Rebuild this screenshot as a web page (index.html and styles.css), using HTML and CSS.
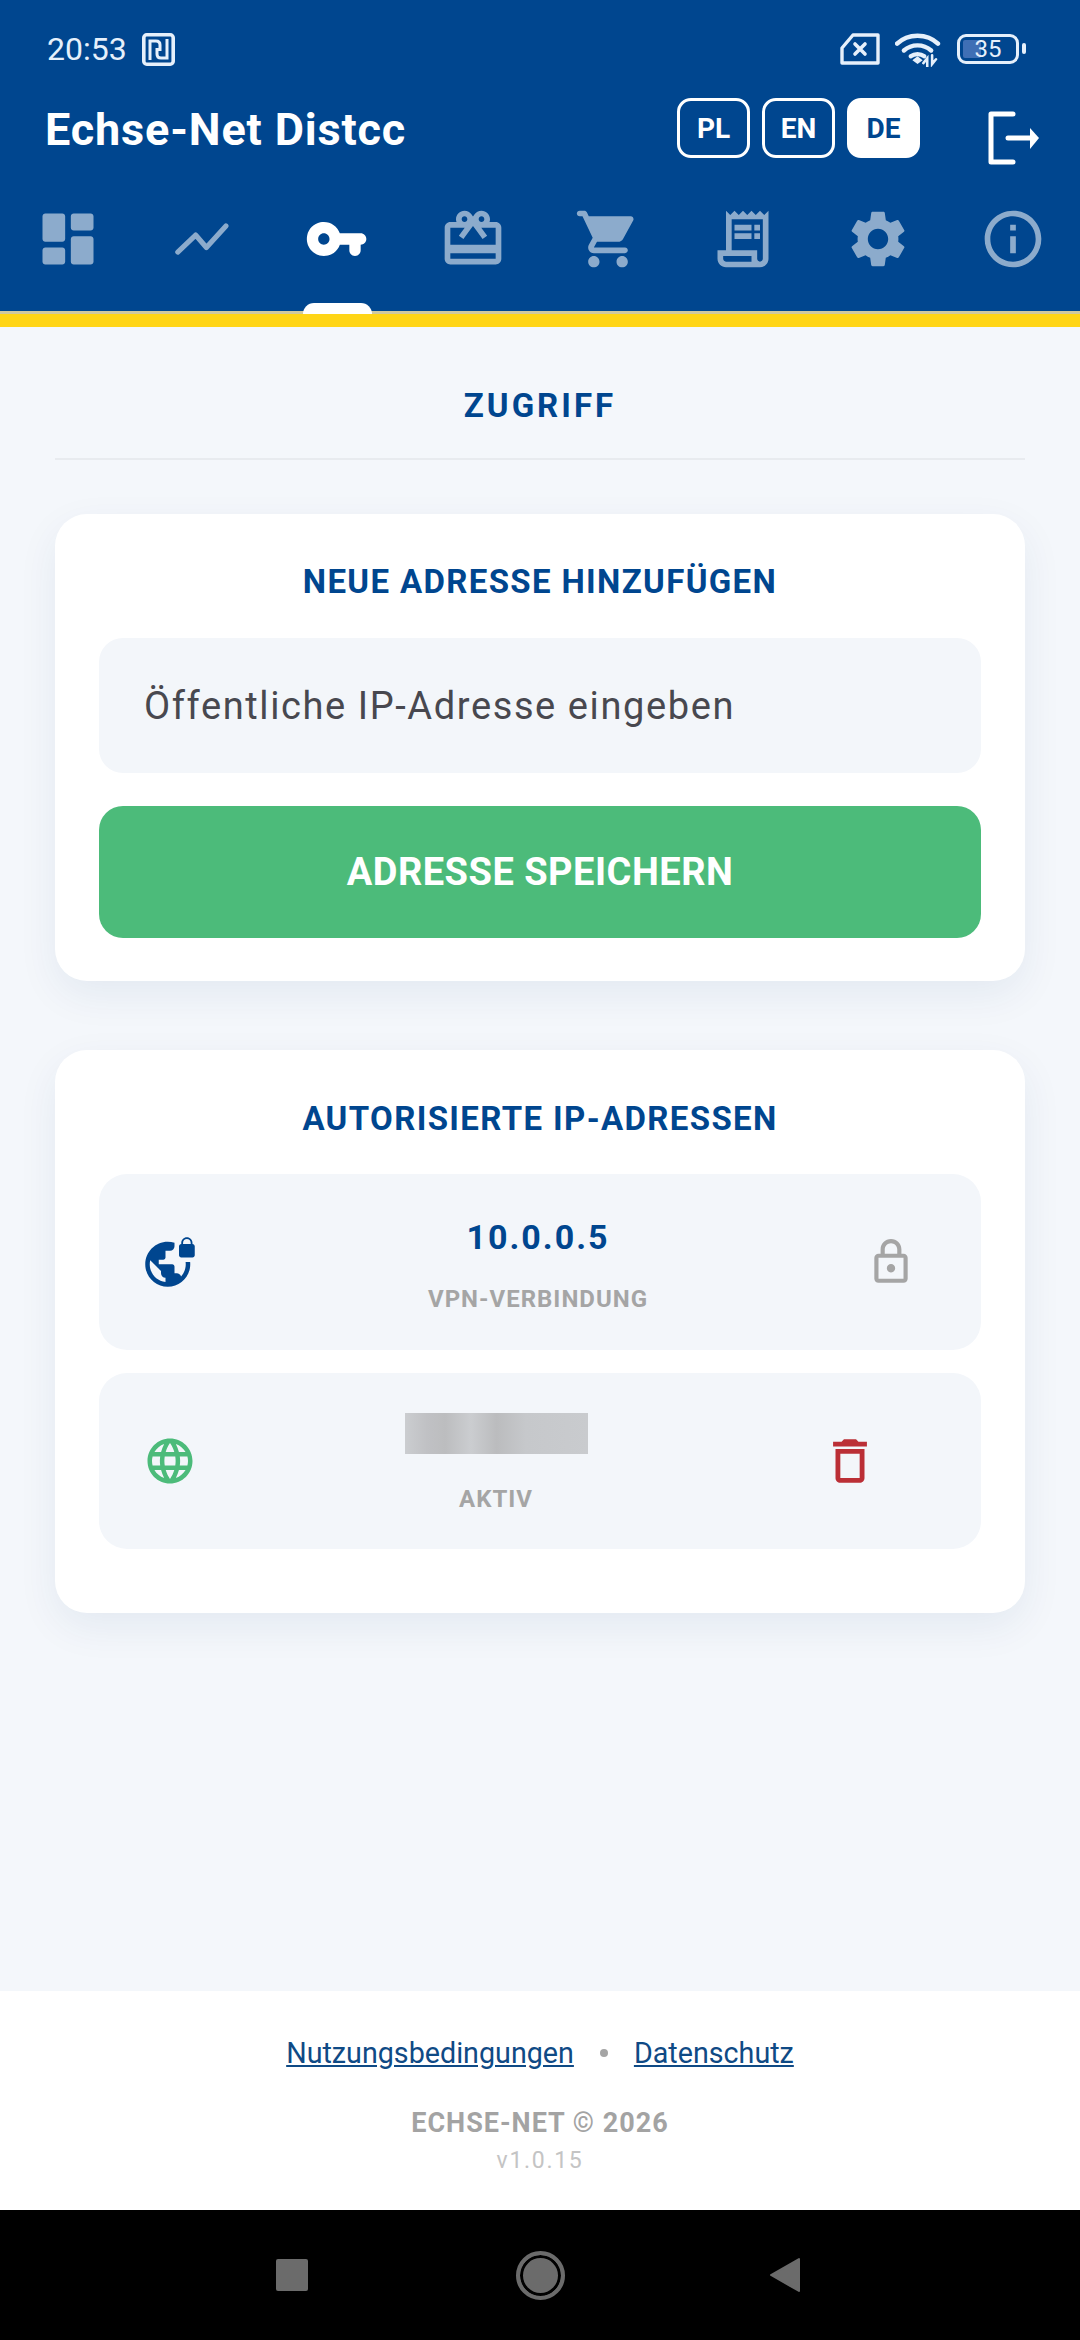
FILE: index.html
```html
<!DOCTYPE html>
<html lang="de">
<head>
    <meta charset="UTF-8">
    <meta name="viewport" content="width=device-width, initial-scale=1.0">
    <title>Echse-Net Distcc</title>
    <link rel="stylesheet" href="styles.css">
</head>
<body>
    <header class="app-header">
        <!-- Statusleiste -->
        <div class="status-bar">
            <div class="status-left">
                <span class="status-time">20:53</span>
                <svg class="nfc-icon" viewBox="0 0 33 33" fill="none" stroke="currentColor">
                    <rect x="1.8" y="1.8" width="29.4" height="29.4" rx="3" stroke-width="3.6"/>
                    <path d="M8 27V8h6c3 0 4 2 4 4v6M25 6v19h-6c-3 0-4-2-4-4v-6" stroke-width="3"/>
                </svg>
            </div>
            <div class="status-right">
                <svg class="sim-icon" viewBox="0 0 40 32" fill="none" stroke="currentColor" stroke-width="3.4" stroke-linejoin="round">
                    <path d="M13 2h25v28H2V15z"/>
                    <path d="M15 11l10 10M25 11L15 21" stroke-linecap="round" stroke-width="3.6"/>
                </svg>
                <svg class="wifi-icon" viewBox="0 0 48 36" fill="none" stroke="currentColor" stroke-linecap="round">
                    <path d="M2 12C13 1 33 1 44 12" stroke-width="4.6"/>
                    <path d="M9 19c8-7 20-7 28 0" stroke-width="4.6"/>
                    <path d="M16 25c4-3 10-3 14 0" stroke-width="4.4"/>
                    <path d="M19 29l4-3 4 3-4 3z" fill="currentColor" stroke-width="1.5"/>
                    <path d="M33 36v-9l-4 5M38 24v9l4-5" stroke-width="2.6"/>
                </svg>
                <div class="battery">
                    <span class="battery-fill"></span>
                    <span class="battery-text">35</span>
                </div>
            </div>
        </div>

        <div class="title-row">
            <h1 class="app-title">Echse-Net Distcc</h1>
            <div class="lang-group">
                <button class="lang-btn">PL</button>
                <button class="lang-btn">EN</button>
                <button class="lang-btn active">DE</button>
            </div>
            <svg class="logout-icon" viewBox="0 0 52 54" fill="none" stroke="#fff" stroke-width="5" stroke-linecap="round" stroke-linejoin="round">
                <path d="M25 3H3v48h22"/>
                <path d="M20 27h24"/>
                <path d="M42 17l9 10-9 11z" fill="#fff" stroke="none"/>
            </svg>
        </div>

        <nav class="tab-nav">
            <a class="tab">
                <svg viewBox="0 0 24 24"><path d="M4 13h6c.55 0 1-.45 1-1V4c0-.55-.45-1-1-1H4c-.55 0-1 .45-1 1v8c0 .55.45 1 1 1zm0 8h6c.55 0 1-.45 1-1v-4c0-.55-.45-1-1-1H4c-.55 0-1 .45-1 1v4c0 .55.45 1 1 1zm10 0h6c.55 0 1-.45 1-1v-8c0-.55-.45-1-1-1h-6c-.55 0-1 .45-1 1v8c0 .55.45 1 1 1zM13 4v4c0 .55.45 1 1 1h6c.55 0 1-.45 1-1V4c0-.55-.45-1-1-1h-6c-.55 0-1 .45-1 1z"/></svg>
            </a>
            <a class="tab">
                <svg viewBox="0 0 24 24"><path d="M3.1 16.6l6.3-6 3.8 4.4 6.9-7.6" fill="none" stroke="#fff" stroke-width="1.8" stroke-linecap="round" stroke-linejoin="round"/></svg>
            </a>
            <a class="tab active">
                <svg viewBox="0 0 24 24"><path d="M12.65 10C11.7 7.31 8.9 5.5 5.77 6.12c-2.29.46-4.15 2.29-4.63 4.58C.32 14.57 3.26 18 7 18c2.61 0 4.83-1.67 5.65-4H16v2c0 1.1.9 2 2 2s2-.9 2-2v-2c1.1 0 2-.9 2-2s-.9-2-2-2h-7.35zM7 14c-1.1 0-2-.9-2-2s.9-2 2-2 2 .9 2 2-.9 2-2 2z"/></svg>
            </a>
            <a class="tab">
                <svg viewBox="0 0 24 24"><path d="M20 6h-2.18c.11-.31.18-.65.18-1 0-1.66-1.34-3-3-3-1.05 0-1.96.54-2.5 1.35l-.5.67-.5-.68C10.96 2.54 10.05 2 9 2 7.34 2 6 3.34 6 5c0 .35.07.69.18 1H4c-1.11 0-1.99.89-1.99 2L2 19c0 1.11.89 2 2 2h16c1.11 0 2-.89 2-2V8c0-1.11-.89-2-2-2zm-5-2c.55 0 1 .45 1 1s-.45 1-1 1-1-.45-1-1 .45-1 1-1zM9 4c.55 0 1 .45 1 1s-.45 1-1 1-1-.45-1-1 .45-1 1-1zm11 15H4v-2h16v2zm0-5H4V8h5.08L7 10.83 8.62 12 11 8.76l1-1.36 1 1.36L15.38 12 17 10.83 14.92 8H20v6z"/></svg>
            </a>
            <a class="tab">
                <svg viewBox="0 0 24 24"><path d="M7 18c-1.1 0-1.99.9-1.99 2S5.9 22 7 22s2-.9 2-2-.9-2-2-2zM1 3c0 .55.45 1 1 1h1l3.6 7.59-1.35 2.44C4.52 15.37 5.48 17 7 17h11c.55 0 1-.45 1-1s-.45-1-1-1H7l1.1-2h7.45c.75 0 1.41-.41 1.75-1.03l3.58-6.49c.37-.66-.11-1.48-.87-1.48H5.21l-.67-1.43c-.16-.35-.52-.57-.9-.57H2c-.55 0-1 .45-1 1zm16 15c-1.1 0-1.99.9-1.99 2s.89 2 1.99 2 2-.9 2-2-.9-2-2-2z"/></svg>
            </a>
            <a class="tab">
                <svg viewBox="0 0 24 24"><path d="M19.5 3.5 18 2l-1.5 1.5L15 2l-1.5 1.5L12 2l-1.5 1.5L9 2 7.5 3.5 6 2v14H3v3c0 1.66 1.34 3 3 3h12c1.66 0 3-1.34 3-3V2l-1.5 1.5zM15 20H6c-.55 0-1-.45-1-1v-1h10v2zm4-1c0 .55-.45 1-1 1s-1-.45-1-1v-3H8V5h11v14z"/><path d="M9 7h6v2H9zM16 7h2v2h-2zM9 10h6v2H9zM16 10h2v2h-2z"/></svg>
            </a>
            <a class="tab">
                <svg viewBox="0 0 24 24"><path d="M19.14 12.94c.04-.3.06-.61.06-.94 0-.32-.02-.64-.07-.94l2.03-1.58c.18-.14.23-.41.12-.61l-1.92-3.32c-.12-.22-.37-.29-.59-.22l-2.39.96c-.5-.38-1.03-.7-1.62-.94l-.36-2.54c-.04-.24-.24-.41-.48-.41h-3.84c-.24 0-.43.17-.47.41l-.36 2.54c-.59.24-1.13.57-1.62.94l-2.39-.96c-.22-.08-.47 0-.59.22L2.74 8.87c-.12.21-.08.47.12.61l2.03 1.58c-.05.3-.09.63-.09.94s.02.64.07.94l-2.03 1.58c-.18.14-.23.41-.12.61l1.92 3.32c.12.22.37.29.59.22l2.39-.96c.5.38 1.03.7 1.62.94l.36 2.54c.05.24.24.41.48.41h3.84c.24 0 .44-.17.47-.41l.36-2.54c.59-.24 1.13-.56 1.62-.94l2.39.96c.22.08.47 0 .59-.22l1.92-3.32c.12-.22.07-.47-.12-.61l-2.01-1.58zM12 15.6c-1.98 0-3.6-1.62-3.6-3.6s1.62-3.6 3.6-3.6 3.6 1.62 3.6 3.6-1.62 3.6-3.6 3.6z"/></svg>
            </a>
            <a class="tab">
                <svg viewBox="0 0 24 24"><path d="M11 7h2v2h-2zm0 4h2v6h-2zm1-9C6.48 2 2 6.48 2 12s4.48 10 10 10 10-4.48 10-10S17.52 2 12 2zm0 18c-4.41 0-8-3.59-8-8s3.59-8 8-8 8 3.59 8 8-3.59 8-8 8z"/></svg>
            </a>
        </nav>
    </header>

    <main class="content">
        <h2 class="page-title">ZUGRIFF</h2>

        <section class="card card-add">
            <h3 class="card-title">NEUE ADRESSE HINZUFÜGEN</h3>
            <input class="ip-input" type="text" placeholder="Öffentliche IP-Adresse eingeben">
            <button class="save-btn">ADRESSE SPEICHERN</button>
        </section>

        <section class="card card-list">
            <h3 class="card-title">AUTORISIERTE IP-ADRESSEN</h3>
            <div class="ip-list">
                <div class="ip-row">
                    <svg class="row-icon vpn" viewBox="0 0 24 24"><path d="M22 4v-.5C22 2.12 20.88 1 19.5 1S17 2.12 17 3.5V4c-.55 0-1 .45-1 1v4c0 .55.45 1 1 1h5c.55 0 1-.45 1-1V5c0-.55-.45-1-1-1zm-.8 0h-3.4v-.5c0-.94.76-1.7 1.7-1.7s1.7.76 1.7 1.7V4zm-2.28 8c.04.33.08.66.08 1 0 2.08-.8 3.97-2.1 5.39-.26-.81-1-1.39-1.9-1.39h-1v-3c0-.55-.45-1-1-1H7v-2h2c.55 0 1-.45 1-1V7h2c1.1 0 2-.9 2-2V3.46c-.95-.3-1.95-.46-3-.46C5.48 3 1 7.48 1 13s4.48 10 10 10 10-4.48 10-10c0-.34-.02-.67-.05-1h-2.03zM10 20.93c-3.95-.49-7-3.85-7-7.93 0-.62.08-1.21.21-1.79L8 16v1c0 1.1.9 2 2 2v1.93z"/></svg>
                    <div class="ip-info">
                        <span class="ip-value">10.0.0.5</span>
                        <span class="ip-label">VPN-VERBINDUNG</span>
                    </div>
                    <svg class="lock-icon" viewBox="0 0 24 24"><path d="M18 8h-1V6c0-2.76-2.24-5-5-5S7 3.24 7 6v2H6c-1.1 0-2 .9-2 2v10c0 1.1.9 2 2 2h12c1.1 0 2-.9 2-2V10c0-1.1-.9-2-2-2zM9 6c0-1.66 1.34-3 3-3s3 1.34 3 3v2H9V6zm9 14H6V10h12v10zm-6-3c1.1 0 2-.9 2-2s-.9-2-2-2-2 .9-2 2 .9 2 2 2z"/></svg>
                </div>
                <div class="ip-row">
                    <svg class="row-icon active" viewBox="0 0 24 24"><path d="M11.99 2C6.47 2 2 6.48 2 12s4.47 10 9.99 10C17.52 22 22 17.52 22 12S17.52 2 11.99 2zm6.93 6h-2.95c-.32-1.25-.78-2.45-1.38-3.56 1.84.63 3.37 1.91 4.33 3.56zM12 4.04c.83 1.2 1.48 2.53 1.91 3.96h-3.82c.43-1.43 1.08-2.76 1.91-3.96zM4.26 14C4.1 13.36 4 12.69 4 12s.1-1.36.26-2h3.38c-.08.66-.14 1.32-.14 2s.06 1.34.14 2H4.26zm.82 2h2.95c.32 1.25.78 2.45 1.38 3.56-1.84-.63-3.37-1.9-4.33-3.56zm2.95-8H5.08c.96-1.66 2.49-2.93 4.33-3.56C8.81 5.55 8.35 6.75 8.03 8zM12 19.96c-.83-1.2-1.48-2.53-1.91-3.96h3.82c-.43 1.43-1.08 2.76-1.91 3.96zM14.34 14H9.66c-.09-.66-.16-1.32-.16-2s.07-1.35.16-2h4.68c.09.65.16 1.32.16 2s-.07 1.34-.16 2zm.25 5.56c.6-1.11 1.06-2.31 1.38-3.56h2.95c-.96 1.65-2.49 2.93-4.33 3.56zM16.36 14c.08-.66.14-1.32.14-2s-.06-1.34-.14-2h3.38c.16.64.26 1.31.26 2s-.1 1.36-.26 2h-3.38z"/></svg>
                    <div class="ip-info">
                        <span class="ip-hidden"></span>
                        <span class="ip-label">AKTIV</span>
                    </div>
                    <button class="delete-btn">
                        <svg viewBox="0 0 24 24"><path d="M6 19c0 1.1.9 2 2 2h8c1.1 0 2-.9 2-2V7H6v12zM8 9h8v10H8V9zm7.5-5l-1-1h-5l-1 1H5v2h14V4h-3.5z"/></svg>
                    </button>
                </div>
            </div>
        </section>
    </main>

    <footer class="app-footer">
        <div class="footer-links">
            <a href="#">Nutzungsbedingungen</a>
            <span class="footer-dot"></span>
            <a href="#">Datenschutz</a>
        </div>
        <p class="copyright">ECHSE-NET © 2026</p>
        <p class="version">v1.0.15</p>
    </footer>

    <!-- Android-Navigation -->
    <div class="system-nav">
        <span class="nav-square"></span>
        <span class="nav-circle"></span>
        <svg class="nav-back" viewBox="0 0 32 36"><path d="M30 2v32L2 18z" fill="#6b6b6b" stroke="#6b6b6b" stroke-width="2" stroke-linejoin="round"/></svg>
    </div>
</body>
</html>
```

FILE: styles.css
```css
* {
    box-sizing: border-box;
}

body {
    margin: 0;
    height: 2340px;
    display: flex;
    flex-direction: column;
    background-color: #f4f7fb;
    font-family: Roboto, "Noto Sans", sans-serif;
    overflow: hidden;
}

/* Header */
.app-header {
    background-color: #00468f;
    height: 327px;
    border-bottom: 13px solid #ffd516;
    box-shadow: inset 0 -3px 0 #cfc9a0;
}

.status-bar {
    height: 98px;
    padding: 0 61px 0 47px;
    display: flex;
    justify-content: space-between;
    align-items: center;
    color: #e6f0fb;
}

.status-left {
    display: flex;
    align-items: center;
    gap: 15px;
}

.status-time {
    font-size: 32px;
}

.nfc-icon {
    width: 33px;
    height: 33px;
}

.status-right {
    display: flex;
    align-items: center;
}

.sim-icon {
    width: 40px;
    height: 32px;
    margin-right: 15px;
}

.wifi-icon {
    width: 47px;
    height: 35px;
    margin-right: 15px;
}

.battery {
    position: relative;
    width: 62px;
    height: 30px;
    border: 3.5px solid #e6f0fb;
    border-radius: 9px;
    display: flex;
    align-items: center;
    justify-content: center;
}

.battery::after {
    content: "";
    position: absolute;
    right: -10px;
    top: 6px;
    width: 4px;
    height: 11px;
    border-radius: 2px;
    background-color: #e6f0fb;
}

.battery-fill {
    position: absolute;
    left: 3px;
    top: 3px;
    bottom: 3px;
    width: 18px;
    background-color: #3f6fb5;
    border-radius: 2px;
}

.battery-text {
    position: relative;
    font-size: 24px;
    line-height: 24px;
}

.title-row {
    display: flex;
    align-items: center;
    height: 60px;
    padding-left: 45px;
}

.app-title {
    margin: 0 0 -2px;
    flex: 1;
    color: #fff;
    font-size: 45px;
    font-weight: 700;
    letter-spacing: 0.85px;
}

.lang-group {
    display: flex;
    gap: 12px;
}

.lang-btn {
    width: 73px;
    height: 60px;
    border: 3px solid #fff;
    border-radius: 14px;
    background: none;
    color: #fff;
    font-family: inherit;
    font-size: 28px;
    font-weight: 700;
    padding: 0;
}

.lang-btn.active {
    background-color: #fff;
    color: #00468f;
}

.logout-icon {
    width: 52px;
    height: 54px;
    margin: 20px 40px 0 68px;
}

.tab-nav {
    display: grid;
    grid-template-columns: repeat(8, 1fr);
    margin-top: 47px;
}

.tab {
    position: relative;
    height: 68px;
    display: flex;
    justify-content: center;
}

.tab svg {
    width: 68px;
    height: 68px;
    fill: #fff;
    opacity: 0.55;
}

.tab.active svg {
    opacity: 1;
}

.tab.active::after {
    content: "";
    position: absolute;
    left: 50%;
    top: 98px;
    width: 69px;
    height: 11px;
    margin-left: -35px;
    background-color: #fff;
    border-radius: 12px 12px 0 0;
}

/* Content */
.content {
    flex: 1;
    padding: 0 55px;
}

.page-title {
    margin: 0 0 54px;
    padding: 61px 0 34px;
    border-bottom: 2px solid #e8ebef;
    color: #00468f;
    font-size: 33px;
    line-height: 36px;
    font-weight: 700;
    letter-spacing: 3px;
    text-align: center;
}

.card {
    background-color: #fff;
    border-radius: 32px;
    padding: 0 44px;
    box-shadow: 0 14px 40px rgba(0, 50, 110, 0.07);
}

.card-add {
    height: 467px;
    padding-top: 50px;
    margin-bottom: 69px;
}

.card-list {
    height: 563px;
    padding-top: 51px;
}

.card-title {
    margin: 0 0 38px;
    color: #00468f;
    font-size: 33px;
    line-height: 36px;
    font-weight: 700;
    letter-spacing: 1.35px;
    text-align: center;
}

.card-list .card-title {
    margin-bottom: 37px;
}

.ip-input {
    display: block;
    width: 100%;
    height: 135px;
    padding: 0 45px;
    border: 0;
    border-radius: 24px;
    background-color: #f3f6fa;
    font-family: inherit;
    font-size: 38px;
    letter-spacing: 1.6px;
}

.ip-input::placeholder {
    color: #48484f;
    opacity: 1;
}

.save-btn {
    display: block;
    width: 100%;
    height: 132px;
    margin-top: 33px;
    border: 0;
    border-radius: 24px;
    background-color: #4cbb7a;
    color: #fff;
    font-family: inherit;
    font-size: 38px;
    font-weight: 700;
    letter-spacing: 0.5px;
}

.ip-list {
    display: flex;
    flex-direction: column;
    gap: 23px;
}

.ip-row {
    height: 176px;
    display: flex;
    align-items: center;
    padding: 0 65px 0 44px;
    border-radius: 28px;
    background-color: #f3f6fa;
}

.row-icon {
    width: 54px;
    height: 54px;
    margin-right: 13px;
    flex-shrink: 0;
}

.row-icon.vpn {
    fill: #00468f;
}

.row-icon.active {
    fill: #4cbb7a;
}

.ip-info {
    flex: 1;
    display: flex;
    flex-direction: column;
    align-items: center;
    padding-top: 6px;
}

.ip-value {
    color: #00468f;
    font-size: 34px;
    line-height: 40px;
    font-weight: 700;
    letter-spacing: 2px;
}

.ip-hidden {
    width: 183px;
    height: 41px;
    margin: -3px 0 3px;
    background: linear-gradient(90deg, #cbcdd0 0%, #c0c1c4 12%, #bcbdbf 22%, #cbcdd0 36%, #bbbcbe 50%, #c6c8cb 66%, #c9cbce 100%);
}

.ip-label {
    margin-top: 28px;
    color: #a5a5a5;
    font-size: 24px;
    line-height: 28px;
    font-weight: 700;
    letter-spacing: 1px;
}

.lock-icon {
    width: 50px;
    height: 50px;
    fill: #a5a5a5;
    flex-shrink: 0;
}

.delete-btn {
    padding: 0 37px 0 39px;
    border: 0;
    background: none;
    display: flex;
}

.delete-btn svg {
    width: 58px;
    height: 58px;
    fill: #bb2f36;
}

/* Footer */
.app-footer {
    height: 219px;
    padding-top: 44px;
    background-color: #fff;
    text-align: center;
}

.footer-links {
    display: flex;
    justify-content: center;
    align-items: center;
    gap: 26px;
    font-size: 28.7px;
    line-height: 36px;
}

.footer-links a {
    color: #0f4a85;
}

.footer-dot {
    width: 8px;
    height: 8px;
    border-radius: 50%;
    background-color: #a5a5a5;
}

.copyright {
    margin: 36px 0 0;
    color: #a3a3a3;
    font-size: 27px;
    line-height: 32px;
    font-weight: 700;
    letter-spacing: 1px;
}

.version {
    margin: 9px 0 0;
    color: #c4c4c4;
    font-size: 23px;
    line-height: 26px;
    letter-spacing: 1.7px;
}

/* System navigation */
.system-nav {
    height: 130px;
    background-color: #000;
    display: flex;
    justify-content: center;
    align-items: center;
    padding-right: 3px;
}

.nav-square {
    width: 32px;
    height: 32px;
    border-radius: 2px;
    background-color: #6b6b6b;
    margin-right: 208px;
}

.nav-circle {
    width: 49px;
    height: 49px;
    border: 4px solid #6b6b6b;
    border-radius: 50%;
    background-color: #6b6b6b;
    box-shadow: inset 0 0 0 3px #000;
    margin-right: 204px;
}

.nav-back {
    width: 32px;
    height: 36px;
}
```
